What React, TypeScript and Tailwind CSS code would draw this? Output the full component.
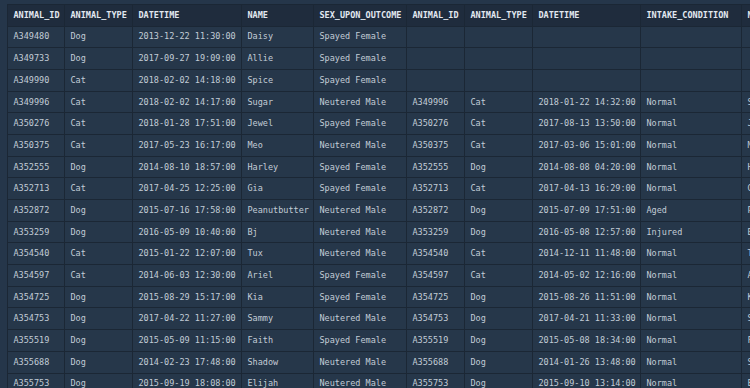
const headers = [
  "ANIMAL_ID",
  "ANIMAL_TYPE",
  "DATETIME",
  "NAME",
  "SEX_UPON_OUTCOME",
  "ANIMAL_ID",
  "ANIMAL_TYPE",
  "DATETIME",
  "INTAKE_CONDITION",
  "NAME",
];

type Row = [string, string, string, string, string, string?, string?, string?, string?];

const rows: Row[] = [
  ["A349480", "Dog", "2013-12-22 11:30:00", "Daisy", "Spayed Female"],
  ["A349733", "Dog", "2017-09-27 19:09:00", "Allie", "Spayed Female"],
  ["A349990", "Cat", "2018-02-02 14:18:00", "Spice", "Spayed Female"],
  ["A349996", "Cat", "2018-02-02 14:17:00", "Sugar", "Neutered Male", "A349996", "Cat", "2018-01-22 14:32:00", "Normal"],
  ["A350276", "Cat", "2018-01-28 17:51:00", "Jewel", "Spayed Female", "A350276", "Cat", "2017-08-13 13:50:00", "Normal"],
  ["A350375", "Cat", "2017-05-23 16:17:00", "Meo", "Neutered Male", "A350375", "Cat", "2017-03-06 15:01:00", "Normal"],
  ["A352555", "Dog", "2014-08-10 18:57:00", "Harley", "Spayed Female", "A352555", "Dog", "2014-08-08 04:20:00", "Normal"],
  ["A352713", "Cat", "2017-04-25 12:25:00", "Gia", "Spayed Female", "A352713", "Cat", "2017-04-13 16:29:00", "Normal"],
  ["A352872", "Dog", "2015-07-16 17:58:00", "Peanutbutter", "Neutered Male", "A352872", "Dog", "2015-07-09 17:51:00", "Aged"],
  ["A353259", "Dog", "2016-05-09 10:40:00", "Bj", "Neutered Male", "A353259", "Dog", "2016-05-08 12:57:00", "Injured"],
  ["A354540", "Cat", "2015-01-22 12:07:00", "Tux", "Neutered Male", "A354540", "Cat", "2014-12-11 11:48:00", "Normal"],
  ["A354597", "Cat", "2014-06-03 12:30:00", "Ariel", "Spayed Female", "A354597", "Cat", "2014-05-02 12:16:00", "Normal"],
  ["A354725", "Dog", "2015-08-29 15:17:00", "Kia", "Spayed Female", "A354725", "Dog", "2015-08-26 11:51:00", "Normal"],
  ["A354753", "Dog", "2017-04-22 11:27:00", "Sammy", "Neutered Male", "A354753", "Dog", "2017-04-21 11:33:00", "Normal"],
  ["A355519", "Dog", "2015-05-09 11:15:00", "Faith", "Spayed Female", "A355519", "Dog", "2015-05-08 18:34:00", "Normal"],
  ["A355688", "Dog", "2014-02-23 17:48:00", "Shadow", "Neutered Male", "A355688", "Dog", "2014-01-26 13:48:00", "Normal"],
  ["A355753", "Dog", "2015-09-19 18:08:00", "Elijah", "Neutered Male", "A355753", "Dog", "2015-09-10 13:14:00", "Normal"],
];

export default function App() {
  return (
    <div className="w-[750px] h-[388px] overflow-hidden bg-[#25364a] pl-[7px] pt-[4px] font-['DejaVu_Sans_Mono',monospace] text-[8.5px]">
      <table className="table-fixed w-[808px] border-collapse">
        <colgroup>
          <col className="w-[57px]" />
          <col className="w-[68px]" />
          <col className="w-[109px]" />
          <col className="w-[72px]" />
          <col className="w-[93px]" />
          <col className="w-[58px]" />
          <col className="w-[68px]" />
          <col className="w-[108px]" />
          <col className="w-[101px]" />
          <col className="w-[74px]" />
        </colgroup>
        <thead>
          <tr className="h-[21.5px] bg-[#1f2c3d]">
            {headers.map((h, i) => (
              <th
                key={i}
                className="border border-[#1b2735] px-[5.5px] text-left font-bold text-[#e2e8f0] whitespace-nowrap overflow-hidden"
              >
                {h}
              </th>
            ))}
          </tr>
        </thead>
        <tbody>
          {rows.map((r, ri) => {
            // the second name column repeats the outcome name when matched
            const cells = [...r];
            while (cells.length < 9) cells.push("");
            cells.push(r[5] ? r[3] : "");
            return (
              <tr key={ri} className="h-[21.7px] bg-[#26374a]">
                {cells.map((c, ci) => (
                  <td
                    key={ci}
                    className="border border-[#1b2735] px-[5.5px] text-[#c2ccd6] whitespace-nowrap overflow-hidden"
                  >
                    {c}
                  </td>
                ))}
              </tr>
            );
          })}
        </tbody>
      </table>
    </div>
  );
}
